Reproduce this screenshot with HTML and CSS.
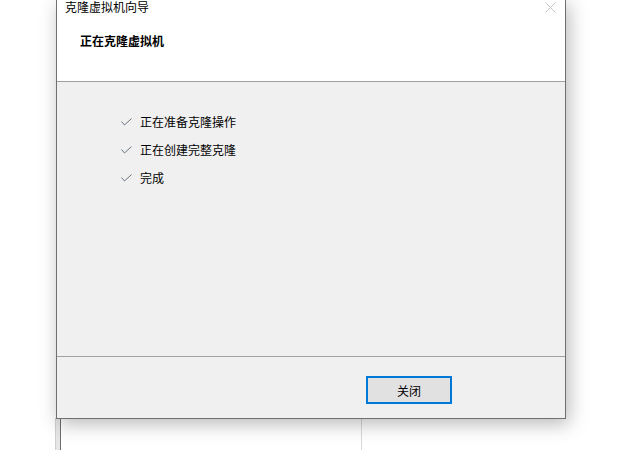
FILE: index.html
```html
<!DOCTYPE html>
<html lang="zh-CN">
<head>
<meta charset="utf-8">
<title>克隆虚拟机向导</title>
<link rel="stylesheet" href="styles.css">
</head>
<body>
<div class="desktop">
  <div class="back-window">
    <div class="back-pane"></div>
    <div class="back-divider"></div>
  </div>
  <div class="dialog">
    <div class="header">
      <div class="titlebar">
        <span class="title">克隆虚拟机向导</span>
        <svg class="close" width="11" height="11" viewBox="0 0 11 11"><path d="M0.5 0.5 L10.5 10.5 M10.5 0.5 L0.5 10.5" stroke="#c4c4c4" stroke-width="1" fill="none"/></svg>
      </div>
      <div class="subtitle">正在克隆虚拟机</div>
    </div>
    <div class="content">
      <ul class="steps">
        <li><svg class="check" width="11" height="8" viewBox="0 0 11 8"><path d="M0.5 3.5 L3.5 7 L10.5 0.5" stroke="#6b7380" stroke-width="1" fill="none"/></svg><span>正在准备克隆操作</span></li>
        <li><svg class="check" width="11" height="8" viewBox="0 0 11 8"><path d="M0.5 3.5 L3.5 7 L10.5 0.5" stroke="#6b7380" stroke-width="1" fill="none"/></svg><span>正在创建完整克隆</span></li>
        <li><svg class="check" width="11" height="8" viewBox="0 0 11 8"><path d="M0.5 3.5 L3.5 7 L10.5 0.5" stroke="#6b7380" stroke-width="1" fill="none"/></svg><span>完成</span></li>
      </ul>
    </div>
    <div class="footer">
      <button class="btn">关闭</button>
    </div>
  </div>
</div>
</body>
</html>
```
FILE: styles.css
```css
html, body {
  margin: 0;
  padding: 0;
  background: #ffffff;
  overflow: hidden;
}
body {
  font-family: "Noto Sans CJK SC", "Noto Sans", sans-serif;
  font-size: 12px;
  color: #000;
}
.desktop {
  position: relative;
  width: 627px;
  height: 450px;
  overflow: hidden;
}
.back-window {
  position: absolute;
  left: 55px;
  top: 418px;
  width: 400px;
  height: 32px;
  display: flex;
}
.back-pane {
  width: 4px;
  background: #e6e6e6;
  border-left: 1px solid #cfcfcf;
  border-right: 1px solid #6e6e6e;
}
.back-divider {
  margin-left: 300px;
  width: 1px;
  background: #d9d9d9;
}
.dialog {
  position: absolute;
  left: 56px;
  top: -1px;
  width: 508px;
  height: 419px;
  border: 1px solid #6f6f6f;
  border-top: none;
  background: #f0f0f0;
  display: flex;
  flex-direction: column;
  box-shadow: 3px 5px 18px rgba(0, 0, 0, 0.28);
}
.header {
  height: 83px;
  background: #ffffff;
  border-bottom: 1px solid #a0a0a0;
  box-sizing: border-box;
}
.titlebar {
  display: flex;
  justify-content: space-between;
  align-items: flex-start;
  height: 16px;
  padding-left: 8px;
  padding-right: 9px;
}
.title {
  line-height: 16px;
}
.close {
  margin-top: 3px;
}
.subtitle {
  font-weight: bold;
  line-height: 16px;
  padding-left: 23px;
  margin-top: 18px;
}
.content {
  flex: 1;
  border-bottom: 1px solid #a0a0a0;
}
.steps {
  list-style: none;
  margin: 0;
  padding: 25px 0 0 64px;
}
.steps li {
  display: flex;
  align-items: center;
  height: 28px;
}
.check {
  margin-right: 8px;
  margin-top: 1px;
}
.footer {
  height: 61px;
  box-sizing: border-box;
  padding: 19px 0 0 309px;
}
.btn {
  width: 86px;
  height: 28px;
  box-sizing: border-box;
  border: 2px solid #0078d7;
  background: #e1e1e1;
  font-family: "Noto Sans CJK SC", "Noto Sans", sans-serif;
  font-size: 12px;
  color: #000;
  padding: 0;
  margin: 0;
}
```
